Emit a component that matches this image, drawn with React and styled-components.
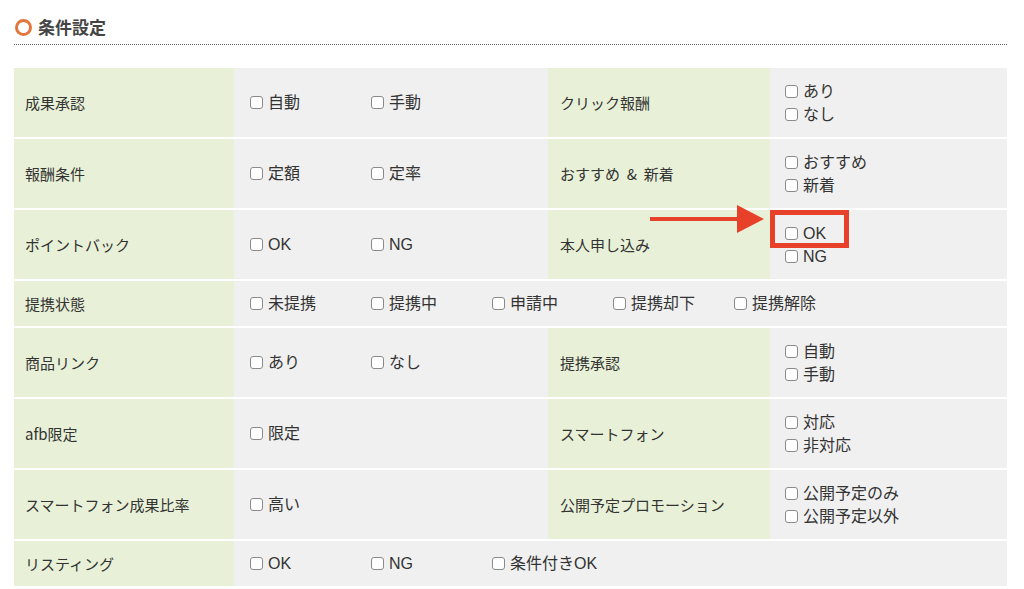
import styled, { createGlobalStyle } from "styled-components";

const GlobalStyle = createGlobalStyle`
  body {
    margin: 0;
    background: #fff;
    font-family: "Hiragino Sans", "Noto Sans CJK JP", sans-serif;
    color: #333;
  }
`;

const Page = styled.div`
  position: relative;
  width: 993px;
  padding: 16px 0 0 14px;
`;

const Heading = styled.h2`
  display: flex;
  align-items: center;
  gap: 6px;
  margin: 0;
  padding: 0 0 6px 1px;
  font-size: 17px;
  font-weight: 700;
  color: #444;
  line-height: 22px;
  border-bottom: 1px dotted #666;
`;

const Ring = styled.span`
  width: 11px;
  height: 11px;
  border: 3.5px solid #e2773d;
  border-radius: 50%;
`;

const Table = styled.table`
  width: 993px;
  margin-top: 23px;
  border-collapse: separate;
  border-spacing: 0;
  table-layout: fixed;
  font-size: 15px;
`;

const Row = styled.tr`
  height: ${(p) => (p.$short ? "47px" : "71px")};
`;

const Label = styled.td`
  padding: 0 0 0 ${(p) => p.$pad || "11px"};
  background: #e8f1d7;
  border-bottom: 2px solid #fff;
  vertical-align: middle;
  font-size: 15px;
  color: #333;
`;

const Value = styled.td`
  position: relative;
  padding: 0 0 0 ${(p) => p.$pad || "16px"};
  background: #f0f0f0;
  border-bottom: 2px solid #fff;
  vertical-align: middle;
`;

const Options = styled.div`
  display: flex;
  flex-direction: ${(p) => (p.$stack ? "column" : "row")};
  line-height: 23px;
`;

const Option = styled.label`
  display: inline-flex;
  align-items: center;
  width: ${(p) => (p.$stack ? "auto" : "121px")};
  font-family: "Liberation Sans", "Noto Sans CJK JP", sans-serif;
  font-size: 16px;
  color: #333;
`;

const Box = styled.span`
  box-sizing: border-box;
  width: 13px;
  height: 13px;
  margin-right: 5px;
  border: 1px solid #8a8a8a;
  border-radius: 3px;
  background: #fff;
  flex: none;
`;

const Highlight = styled.div`
  position: absolute;
  left: 0;
  top: 0;
  width: 79px;
  height: 38px;
  box-sizing: border-box;
  border: 5px solid #e8412a;
`;

const Arrow = styled.svg`
  position: absolute;
  left: 650px;
  top: 205px;
`;

const Opt = ({ children, stack }) => (
  <Option $stack={stack}>
    <Box />
    {children}
  </Option>
);

const Inline = ({ opts }) => (
  <Options>
    {opts.map((o) => (
      <Opt key={o}>{o}</Opt>
    ))}
  </Options>
);

const Stack = ({ opts }) => (
  <Options $stack>
    {opts.map((o) => (
      <Opt key={o} stack>
        {o}
      </Opt>
    ))}
  </Options>
);

export default function App() {
  return (
    <>
      <GlobalStyle />
      <Page>
        <Heading>
          <Ring />
          条件設定
        </Heading>
        <Table>
          <colgroup>
            <col style={{ width: 220 }} />
            <col style={{ width: 314 }} />
            <col style={{ width: 222 }} />
            <col style={{ width: 237 }} />
          </colgroup>
          <tbody>
            <Row>
              <Label>成果承認</Label>
              <Value><Inline opts={["自動", "手動"]} /></Value>
              <Label $pad="12px">クリック報酬</Label>
              <Value $pad="15px"><Stack opts={["あり", "なし"]} /></Value>
            </Row>
            <Row>
              <Label>報酬条件</Label>
              <Value><Inline opts={["定額", "定率"]} /></Value>
              <Label $pad="12px">おすすめ &nbsp;&amp;&nbsp; 新着</Label>
              <Value $pad="15px"><Stack opts={["おすすめ", "新着"]} /></Value>
            </Row>
            <Row>
              <Label>ポイントバック</Label>
              <Value><Inline opts={["OK", "NG"]} /></Value>
              <Label $pad="12px">本人申し込み</Label>
              <Value $pad="15px">
                <Stack opts={["OK", "NG"]} />
                <Highlight />
              </Value>
            </Row>
            <Row $short>
              <Label>提携状態</Label>
              <Value colSpan={3}>
                <Inline opts={["未提携", "提携中", "申請中", "提携却下", "提携解除"]} />
              </Value>
            </Row>
            <Row>
              <Label>商品リンク</Label>
              <Value><Inline opts={["あり", "なし"]} /></Value>
              <Label $pad="12px">提携承認</Label>
              <Value $pad="15px"><Stack opts={["自動", "手動"]} /></Value>
            </Row>
            <Row>
              <Label>afb限定</Label>
              <Value><Inline opts={["限定"]} /></Value>
              <Label $pad="12px">スマートフォン</Label>
              <Value $pad="15px"><Stack opts={["対応", "非対応"]} /></Value>
            </Row>
            <Row>
              <Label>スマートフォン成果比率</Label>
              <Value><Inline opts={["高い"]} /></Value>
              <Label $pad="12px">公開予定プロモーション</Label>
              <Value $pad="15px"><Stack opts={["公開予定のみ", "公開予定以外"]} /></Value>
            </Row>
            <Row $short>
              <Label>リスティング</Label>
              <Value colSpan={3}>
                <Inline opts={["OK", "NG", "条件付きOK"]} />
              </Value>
            </Row>
          </tbody>
        </Table>
        <Arrow width="116" height="30" viewBox="0 0 116 30">
          <rect x="0" y="12" width="90" height="4" fill="#e8412a" />
          <polygon points="87,0 114,14 87,28" fill="#e8412a" />
        </Arrow>
      </Page>
    </>
  );
}
